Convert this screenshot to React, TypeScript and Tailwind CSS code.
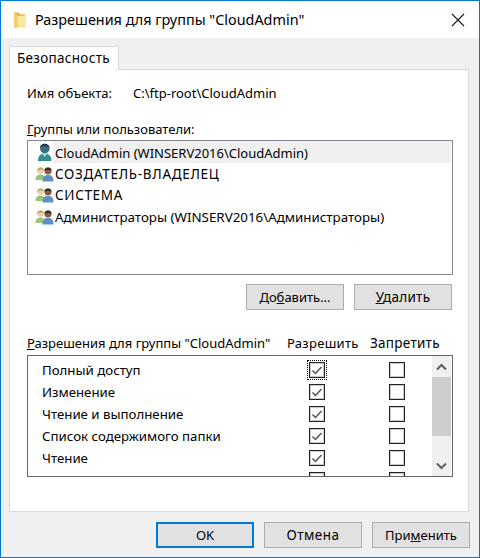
import React from "react";

function Folder() {
  return (
    <svg width="14" height="18" viewBox="0 0 14 18" className="shrink-0">
      <path d="M1 1.5 L6 1.5 L6.5 3 L12 3.5 L12 16 L1 16.5 Z" fill="#e8b94e" />
      <path d="M5 5 L13 4.5 L13 15 L5 16.5 Z" fill="#fbe8a0" />
      <path d="M1 1.5 L5 5 L5 16.5 L1 16.5 Z" fill="#f3d06f" />
    </svg>
  );
}

function CloseIcon() {
  return (
    <svg width="14" height="14" viewBox="0 0 14 14" className="shrink-0">
      <path d="M1 1 L13 13 M13 1 L1 13" stroke="#1a1a1a" strokeWidth="1.1" fill="none" />
    </svg>
  );
}

function UserIcon() {
  return (
    <svg width="18" height="20" viewBox="0 0 18 20" className="shrink-0">
      <path d="M2 19 C2 13.5 5 11.5 8.5 11.5 C12.5 11.5 15.5 13.5 15.5 19 Z" fill="#2f8f8c" />
      <path d="M6.5 11.5 L8.7 15 L11 11.5 Z" fill="#c4e4e0" />
      <circle cx="8.8" cy="6.5" r="4.8" fill="#3b6f85" />
      <path d="M4 5.5 C4.6 0.8 12.4 0.4 13.6 5.5 C10.5 3.6 7 3.8 4 5.5 Z" fill="#24394c" />
    </svg>
  );
}

function GroupIcon() {
  return (
    <svg width="19" height="16" viewBox="0 0 19 16" className="shrink-0">
      <path d="M0.5 14 C0.5 10 2.5 8.5 5.5 8.5 C8.5 8.5 10 10 10 14 Z" fill="#9cc378" />
      <circle cx="5.5" cy="4.6" r="3.3" fill="#ecd0aa" />
      <path d="M2.2 5 C1.8 0.6 9 0.3 9 4.2 C7 3.4 4.5 3.2 2.2 5 Z" fill="#b9a263" />
      <path d="M7.5 15.5 C7.5 10.5 9.5 9 13 9 C16.5 9 18.5 10.5 18.5 15.5 Z" fill="#5f8fc4" />
      <circle cx="13" cy="5" r="3.5" fill="#8a5a3a" />
      <path d="M9.5 5 C9.2 0.6 16.8 0.4 16.5 5 C14.5 3.4 11.5 3.4 9.5 5 Z" fill="#2e2a2a" />
    </svg>
  );
}

function Checkbox({ checked, focus }: { checked?: boolean; focus?: boolean }) {
  return (
    <div
      className={
        "w-[16px] h-[16px] border border-[#222222] shadow-[inset_0_0_0_1px_rgba(0,0,0,0.2)] bg-white flex items-center justify-center shrink-0 " +
        (focus ? "outline-1 outline-dotted outline-black outline-offset-[1px]" : "")
      }
    >
      {checked && (
        <svg width="12" height="12" viewBox="0 0 12 12">
          <path d="M1.5 6.5 L4.5 9.5 L10.5 3" stroke="#555555" strokeWidth="1.5" fill="none" />
        </svg>
      )}
    </div>
  );
}

function Button({ children, primary }: { children: React.ReactNode; primary?: boolean }) {
  return (
    <div
      className={
        "w-[98px] h-[26px] flex items-center justify-center bg-[#e1e1e1] text-black " +
        (primary ? "border-2 border-[#0078d7]" : "border border-[#adadad]")
      }
    >
      <span>{children}</span>
    </div>
  );
}

const groups = [
  { name: "СОЗДАТЕЛЬ-ВЛАДЕЛЕЦ", h: "h-[21px]", t: "text-[13.5px] tracking-[0.7px]" },
  { name: "СИСТЕМА", h: "h-[22px]", t: "text-[13.5px] tracking-[0.65px]" },
  { name: "Администраторы (WINSERV2016\\Администраторы)", h: "h-[21px]", t: "text-[13.35px]" },
];

const perms = [
  { name: "Полный доступ", checked: true, focus: true },
  { name: "Изменение", checked: true },
  { name: "Чтение и выполнение", checked: true },
  { name: "Список содержимого папки", checked: true },
  { name: "Чтение", checked: true },
  { name: "Запись", checked: true },
];

export default function App() {
  return (
    <div className="w-[480px] h-[558px] border border-[#0078d7] bg-[#f0f0f0] flex flex-col font-['Noto_Sans','Open_Sans',sans-serif] text-[13px] leading-[18px] text-black overflow-hidden">
      <div className="h-[37px] bg-white flex items-center pl-[12px] pr-[14px] shrink-0">
        <Folder />
        <span className="ml-[8px] text-[14.4px] leading-[20px] flex-1 whitespace-nowrap">
          Разрешения для группы "CloudAdmin"
        </span>
        <CloseIcon />
      </div>

      <div className="flex-1 flex flex-col pl-[8px] pr-[10px] pt-[8px]">
        <div className="flex">
          <div className="h-[24px] w-[110px] -mb-px z-10 bg-white border border-b-0 border-[#d9d9d9] flex items-center pl-[7px] pb-[2px] text-[13.5px] tracking-[0.3px]">
            Безопасность
          </div>
        </div>
        <div className="h-[443px] bg-white border border-[#d9d9d9] pl-[17px] pr-[15px] flex flex-col shrink-0">
          <div className="mt-[14px] h-[18px] flex whitespace-nowrap">
            <span className="w-[106px]">Имя объекта:</span>
            <span>C:\ftp-root\CloudAdmin</span>
          </div>
          <div className="mt-[18px] h-[18px] whitespace-nowrap">
            <span className="underline">Г</span>руппы или пользователи:
          </div>
          <div className="mt-[2px] h-[135px] border border-[#828790] bg-white pl-[6px] pr-px flex flex-col shrink-0">
            <div className="h-[22px] flex items-center">
              <div className="w-[19px] flex justify-center pl-[2px]"><UserIcon /></div>
              <div className="flex-1 h-[22px] bg-[#f0f0f0] flex items-center pl-[2px] pt-px whitespace-nowrap">
                CloudAdmin (WINSERV2016\CloudAdmin)
              </div>
            </div>
            {groups.map((g) => (
              <div key={g.name} className={g.h + " flex items-center"}>
                <div className="w-[19px] flex justify-center pl-[2px]"><GroupIcon /></div>
                <div className={"pl-[2px] whitespace-nowrap " + g.t}>{g.name}</div>
              </div>
            ))}
          </div>
          <div className="mt-[9px] flex justify-end gap-[10px] pr-px">
            <Button>
              До<span className="underline">б</span>авить...
            </Button>
            <Button>
              <span className="text-[13.5px] tracking-[0.3px]"><span className="underline">У</span>далить</span>
            </Button>
          </div>
          <div className="mt-[24px] h-[18px] flex whitespace-nowrap">
            <span className="w-[260px]">
              <span className="underline">Р</span>азрешения для группы "CloudAdmin"
            </span>
            <span className="w-[83px] tracking-[0.3px]">Разрешить</span>
            <span className="text-[13.5px] tracking-[0.28px]">Запретить</span>
          </div>
          <div className="mt-[3px] h-[122px] border border-[#666666] bg-white flex shrink-0">
            <div className="flex-1 overflow-hidden pt-[3px]">
              {perms.map((p) => (
                <div key={p.name} className="h-[22px] flex items-center">
                  <span className="w-[281px] pl-[14px] whitespace-nowrap text-[13.25px]">{p.name}</span>
                  <div className="w-[80px]"><Checkbox checked={p.checked} focus={p.focus} /></div>
                  <Checkbox />
                </div>
              ))}
            </div>
            <div className="w-[19px] mr-px bg-[#f0f0f0] flex flex-col items-center shrink-0">
              <div className="h-[21px] flex items-center justify-center">
                <svg width="11" height="8" viewBox="0 0 11 8">
                  <path d="M1 6.5 L5.5 2 L10 6.5" stroke="#606060" strokeWidth="2" fill="none" />
                </svg>
              </div>
              <div className="h-[59px] w-full bg-[#cdcdcd]" />
              <div className="flex-1 flex items-end justify-center pb-[6px]">
                <svg width="11" height="8" viewBox="0 0 11 8">
                  <path d="M1 1.5 L5.5 6 L10 1.5" stroke="#606060" strokeWidth="2" fill="none" />
                </svg>
              </div>
            </div>
          </div>
        </div>
        <div className="mt-[10px] flex justify-end gap-[10px] -mr-px">
          <Button primary>OK</Button>
          <Button><span className="text-[13.5px] tracking-[0.5px]">Отмена</span></Button>
          <Button>
            При<span className="underline">м</span>енить
          </Button>
        </div>
      </div>
    </div>
  );
}
